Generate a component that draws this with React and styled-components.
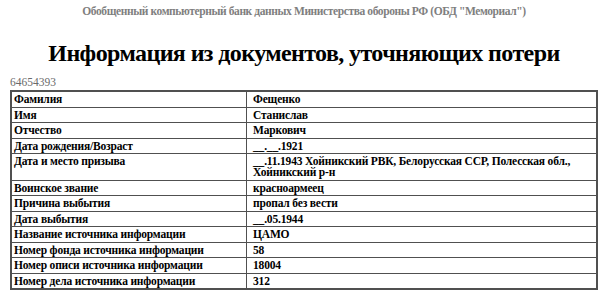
import React from "react";
import styled, { createGlobalStyle } from "styled-components";

const Global = createGlobalStyle`
  html, body { margin: 0; padding: 0; background: #fff; }
`;

const serif = `"Liberation Serif", "Times New Roman", serif`;

const Page = styled.div`
  display: flex;
  flex-direction: column;
  padding: 3px 7px 0 10px;
  font-family: ${serif};
  color: #000;
`;

const Source = styled.div`
  font-family: ${serif};
  text-align: center;
  font-weight: bold;
  font-size: 11.5px;
  letter-spacing: -0.4px;
  line-height: 16px;
  color: #7f7f7f;
`;

const Title = styled.h1`
  font-family: ${serif};
  margin: 19px 0 0;
  text-align: center;
  font-size: 24px;
  letter-spacing: -0.6px;
  line-height: 30px;
  font-weight: bold;
`;

const RecordId = styled.div`
  font-family: ${serif};
  margin-top: 8px;
  font-size: 11.5px;
  line-height: 12px;
  color: #6a6a6a;
`;

const Table = styled.table`
  margin-top: 2px;
  border-collapse: collapse;
  width: 100%;
  border: 2px solid #505050;
`;

const Cell = styled.td`
  font-family: ${serif};
  border: 1px solid #505050;
  padding: 2px 2px 1.5px ${(p) => (p.$label ? "2px" : "6px")};
  font-size: 11.5px;
  letter-spacing: -0.18px;
  line-height: 11px;
  font-weight: bold;
  vertical-align: top;
  width: ${(p) => (p.$label ? "230px" : "auto")};
`;

const rows = [
  ["Фамилия", "Фещенко"],
  ["Имя", "Станислав"],
  ["Отчество", "Маркович"],
  ["Дата рождения/Возраст", "__.__.1921"],
  ["Дата и место призыва", "__.11.1943 Хойникский РВК, Белорусская ССР, Полесская обл., Хойникский р-н"],
  ["Воинское звание", "красноармеец"],
  ["Причина выбытия", "пропал без вести"],
  ["Дата выбытия", "__.05.1944"],
  ["Название источника информации", "ЦАМО"],
  ["Номер фонда источника информации", "58"],
  ["Номер описи источника информации", "18004"],
  ["Номер дела источника информации", "312"],
];

export default function App() {
  return (
    <>
      <Global />
      <Page>
        <Source>Обобщенный компьютерный банк данных Министерства обороны РФ (ОБД "Мемориал")</Source>
        <Title>Информация из документов, уточняющих потери</Title>
        <RecordId>64654393</RecordId>
        <Table>
          <tbody>
            {rows.map(([k, v]) => (
              <tr key={k}>
                <Cell $label>{k}</Cell>
                <Cell>{v}</Cell>
              </tr>
            ))}
          </tbody>
        </Table>
      </Page>
    </>
  );
}
